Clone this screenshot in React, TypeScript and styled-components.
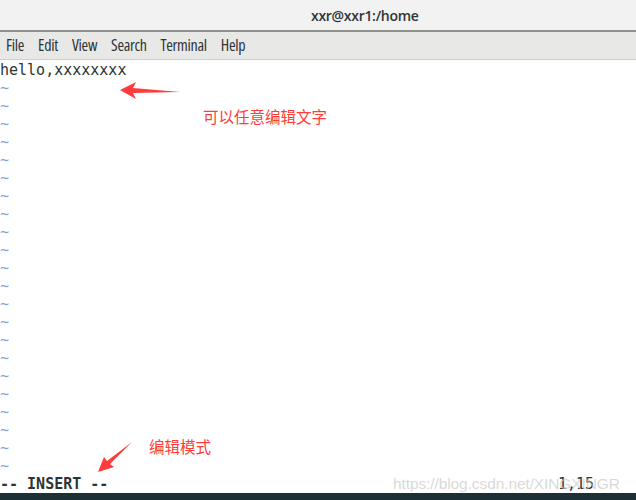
import React from 'react';
import styled, {createGlobalStyle} from 'styled-components';

const GlobalStyle = createGlobalStyle`
  html, body {
    margin: 0;
    padding: 0;
    background: #ffffff;
  }
  #root {
    width: 636px;
    height: 500px;
    overflow: hidden;
  }
`;

const menuItems = ['File', 'Edit', 'View', 'Search', 'Terminal', 'Help'];
const TILDE_ROWS = 22;

function App () {
    return (
        <Window>
            <GlobalStyle/>
            <TitleBar>
                <Title>xxr@xxr1:/home</Title>
            </TitleBar>
            <MenuBar>
                {menuItems.map(item => <MenuItem key={item}>{item}</MenuItem>)}
            </MenuBar>
            <Screen>
                <Line>hello,xxxxxxxx</Line>
                {Array.from({length: TILDE_ROWS}).map((_, i) => (
                    <Line key={i}><Tilde>~</Tilde></Line>
                ))}
                <StatusLine>
                    <Mode>-- INSERT --</Mode>
                    <Cursor>1,15</Cursor>
                </StatusLine>

                {/* annotations drawn over the terminal */}
                <Arrow width="64" height="20" viewBox="0 0 64 20" $left={118} $top={21}>
                    <path d="M2 9 L18 1 L15 7 L62 11 L15 12 L18 18 Z" fill="#ff3b3b"/>
                </Arrow>
                <Note $left={203} $top={45}>可以任意编辑文字</Note>

                <Arrow width="40" height="34" viewBox="0 0 40 34" $left={96} $top={380}>
                    <path d="M2 32 L8 17 L11 21 L36 2 L14 24 L18 27 Z" fill="#ff3b3b"/>
                </Arrow>
                <Note $left={149} $top={375}>编辑模式</Note>

                <Watermark>https://blog.csdn.net/XINGXINGR</Watermark>
            </Screen>
            <Desktop/>
        </Window>
    );
}

const Window = styled.div`
  display: flex;
  flex-direction: column;
  width: 636px;
  height: 500px;
  background: #ffffff;
`;

const TitleBar = styled.div`
  height: 30px;
  flex-shrink: 0;
  background: #f2f2f2;
  border-bottom: 2px solid #8e908c;
  display: flex;
  align-items: center;
  padding-left: 311px;
`;

const Title = styled.span`
  font-family: "Open Sans", "Noto Sans", sans-serif;
  font-size: 14px;
  font-weight: 600;
  color: #2e3436;
  letter-spacing: -0.3px;
`;

const MenuBar = styled.div`
  height: 27px;
  flex-shrink: 0;
  background: #e8e8e7;
  border-bottom: 1px solid #cfcfcd;
  display: flex;
  align-items: center;
  gap: 14px;
  padding-left: 6px;
`;

const MenuItem = styled.span`
  font-family: "Open Sans", "Noto Sans", sans-serif;
  font-size: 16px;
  line-height: 20px;
  font-stretch: 84%;
  color: #2e3436;
  letter-spacing: -0.3px;
  margin-top: -2px;
`;

const Screen = styled.div`
  position: relative;
  flex: 1;
  padding-top: 1px;
  font-family: "DejaVu Sans Mono", "Liberation Mono", monospace;
  font-size: 15px;
  color: #2e3436;
`;

const Line = styled.div`
  height: 18px;
  line-height: 18px;
  white-space: pre;
`;

const Tilde = styled.span`
  color: #7ca6da;
`;

const StatusLine = styled(Line)`
  display: flex;
  justify-content: space-between;
  padding-right: 42px;
`;

const Mode = styled.span`
  font-weight: bold;
`;

const Cursor = styled.span``;

const Arrow = styled.svg<{$left: number; $top: number}>`
  position: absolute;
  left: ${p => p.$left}px;
  top: ${p => p.$top}px;
`;

const Note = styled.div<{$left: number; $top: number}>`
  position: absolute;
  left: ${p => p.$left}px;
  top: ${p => p.$top}px;
  font-family: "Noto Sans CJK SC", sans-serif;
  font-size: 15.5px;
  line-height: 22px;
  color: #ff3b3b;
`;

const Watermark = styled.div`
  position: absolute;
  left: 393px;
  top: 413px;
  font-family: "Liberation Sans", Arial, sans-serif;
  font-size: 15.5px;
  line-height: 22px;
  color: rgba(200, 200, 200, 0.7);
  letter-spacing: -0.1px;
`;

const Desktop = styled.div`
  height: 7px;
  flex-shrink: 0;
  background: #1c3036;
`;

export default App;
